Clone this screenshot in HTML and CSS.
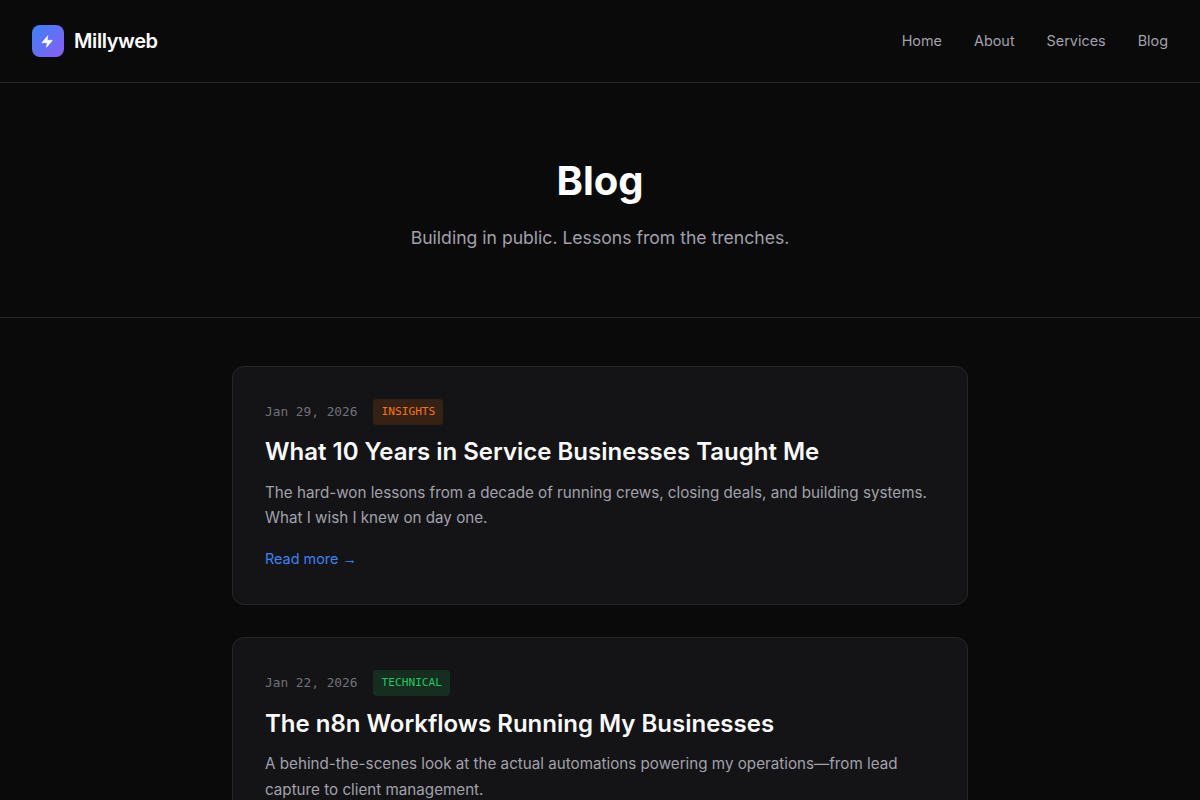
FILE: index.html
```html
<!DOCTYPE html>
<html lang="en">
<head>
<meta charset="utf-8">
<title>Blog - Millyweb</title>
<link rel="stylesheet" href="styles.css">
</head>
<body>
<header class="site-header">
  <a class="brand" href="#">
    <span class="brand-mark">
      <svg viewBox="1.4 -0.8 24 24" width="14" height="14" aria-hidden="true"><path d="M13 2 3 14h9l-1 8 10-12h-9l1-8z"/></svg>
    </span>
    <span class="brand-name">Millyweb</span>
  </a>
  <nav class="nav">
    <a href="#">Home</a>
    <a href="#">About</a>
    <a href="#">Services</a>
    <a href="#">Blog</a>
  </nav>
</header>
<section class="hero">
  <h1>Blog</h1>
  <p>Building in public. Lessons from the trenches.</p>
</section>
<main class="posts">
  <article class="card">
    <div class="meta">
      <span class="date">Jan 29, 2026</span>
      <span class="tag tag-insights">INSIGHTS</span>
    </div>
    <h2>What 10 Years in Service Businesses Taught Me</h2>
    <p class="excerpt">The hard-won lessons from a decade of running crews, closing deals, and building systems. What I wish I knew on day one.</p>
    <a class="more" href="#">Read more <span class="arrow">→</span></a>
  </article>
  <article class="card">
    <div class="meta">
      <span class="date">Jan 22, 2026</span>
      <span class="tag tag-technical">TECHNICAL</span>
    </div>
    <h2>The n8n Workflows Running My Businesses</h2>
    <p class="excerpt">A behind-the-scenes look at the actual automations powering my operations—from lead capture to client management.</p>
    <a class="more" href="#">Read more <span class="arrow">→</span></a>
  </article>
</main>
</body>
</html>
```
FILE: styles.css
```css
* { box-sizing: border-box; margin: 0; padding: 0; }
html, body { background: #0a0a0b; }
body {
  font-family: Inter, "Liberation Sans", sans-serif;
  color: #fafafa;
  line-height: 1.6;
}
a { text-decoration: none; color: inherit; }
.site-header {
  display: flex;
  align-items: center;
  justify-content: space-between;
  height: 83px;
  padding: 0 32px;
  border-bottom: 1px solid #27272a;
}
.brand { display: flex; align-items: center; gap: 10px; }
.brand-mark {
  width: 32px;
  height: 32px;
  border-radius: 8px;
  background: linear-gradient(135deg, #3b82f6, #8b5cf6);
  display: flex;
  align-items: center;
  justify-content: center;
}
.brand-mark svg { fill: #fff; stroke: #fff; stroke-width: 1; stroke-linejoin: round; display: block; }
.brand-name { font-size: 20px; font-weight: 600; color: #fff; letter-spacing: -0.4px; }
.nav { display: flex; gap: 32px; }
.nav a { font-size: 14.4px; color: #a1a1aa; }
.hero {
  height: 235px;
  padding-top: 65px;
  text-align: center;
  border-bottom: 1px solid #27272a;
}
.hero h1 { font-size: 40px; font-weight: 700; line-height: 66px; color: #fff; }
.hero p { font-size: 17.6px; line-height: 28px; margin-top: 10px; color: #a1a1aa; }
.posts {
  max-width: 800px;
  margin: 0 auto;
  padding: 48px 32px;
  display: flex;
  flex-direction: column;
  gap: 32px;
}
.card {
  background: #141416;
  border: 1px solid #27272a;
  border-radius: 12px;
  padding: 32px;
}
.meta { display: flex; align-items: center; gap: 16px; margin-bottom: 11.5px; }
.date { font-family: "DejaVu Sans Mono", "Liberation Mono", monospace; font-size: 12.8px; color: #71717a; }
.tag {
  font-family: "DejaVu Sans Mono", "Liberation Mono", monospace;
  font-size: 11.2px;
  line-height: 1.6;
  padding: 4px 8px;
  border-radius: 4px;
}
.tag-insights { color: #f97316; background: rgba(249, 115, 22, 0.15); }
.tag-technical { color: #22c55e; background: rgba(34, 197, 94, 0.15); }
.card h2 { font-size: 24px; font-weight: 600; line-height: 31.2px; color: #fafafa; margin-bottom: 12px; }
.excerpt { font-size: 15.2px; line-height: 1.7; color: #a1a1aa; margin-bottom: 15.15px; }
.more { display: block; font-size: 14.4px; line-height: 26px; color: #3b82f6; }
.arrow { font-family: "Liberation Sans", sans-serif; }
```
